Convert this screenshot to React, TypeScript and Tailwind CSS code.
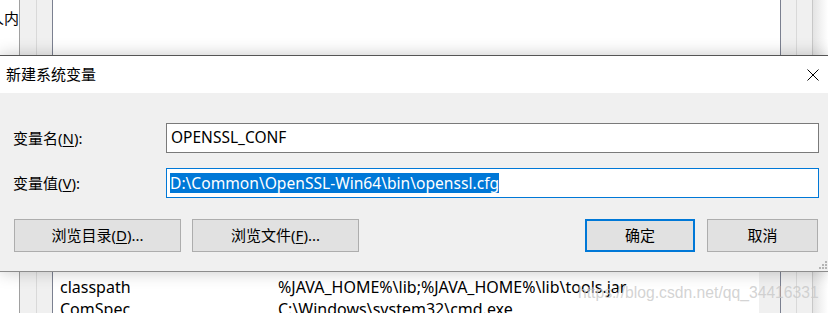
import { useState } from "react";

const uiFont = "font-['Noto_Sans','Noto_Sans_CJK_SC',sans-serif]";

function Mnemonic({ children }: { children: string }) {
  return <span className="underline underline-offset-2 decoration-1">{children}</span>;
}

function DialogButton({
  width,
  primary,
  children,
}: {
  width: string;
  primary?: boolean;
  children: React.ReactNode;
}) {
  return (
    <button
      className={`${width} h-[33px] bg-[#e1e1e1] text-[15px] text-black flex items-center justify-center ${
        primary ? "border-2 border-[#0078d7]" : "border border-[#adadad]"
      }`}
    >
      {children}
    </button>
  );
}

function ResizeGrip() {
  return (
    <svg width="9" height="9" viewBox="0 0 9 9" className="absolute right-0 bottom-[1px]">
      <g fill="#b4b4b4">
        <rect x="6" y="0" width="2" height="2" />
        <rect x="3" y="3" width="2" height="2" />
        <rect x="6" y="3" width="2" height="2" />
        <rect x="0" y="6" width="2" height="2" />
        <rect x="3" y="6" width="2" height="2" />
        <rect x="6" y="6" width="2" height="2" />
      </g>
    </svg>
  );
}

export default function App() {
  const [name] = useState("OPENSSL_CONF");
  const [value] = useState("D:\\Common\\OpenSSL-Win64\\bin\\openssl.cfg");

  const rows = [
    { key: "classpath", val: "%JAVA_HOME%\\lib;%JAVA_HOME%\\lib\\tools.jar" },
    { key: "ComSpec", val: "C:\\Windows\\system32\\cmd.exe" },
  ];

  return (
    <div className={`relative w-[828px] h-[313px] overflow-hidden bg-white ${uiFont}`}>
      {/* window behind the dialog */}
      <div className="flex h-full">
        <div className="w-[19px] overflow-hidden bg-white">
          <div className="ml-[-11px] mt-[8px] whitespace-nowrap text-[15px] leading-[20px] text-black">
            人内容
          </div>
        </div>
        <div className="w-[17px] border-l border-[#a0a0a0] bg-[#f0f0f0]" />
        <div className="w-[16px] border-l border-[#d9d9d9] bg-[#f0f0f0]" />
        <div className="flex-1 flex flex-col border-l border-[#7b8090] bg-white">
          <div className="flex-1" />
          <div className="h-[59px] flex">
            <div className="flex-1 pt-[22px] pl-[7px] text-[16px] leading-[22px] text-black">
              {rows.map((r) => (
                <div key={r.key} className="flex whitespace-nowrap">
                  <span className="w-[218px]">{r.key}</span>
                  <span>{r.val}</span>
                </div>
              ))}
            </div>
            <div className="w-[21px] bg-[#f0f0f0]" />
          </div>
        </div>
        <div className="w-[16px] border-l border-[#7b8090] bg-[#f0f0f0]" />
        <div className="w-[16px] border-l border-[#d9d9d9] bg-[#f0f0f0]" />
        <div className="w-[16px] border-l border-[#c8c8c8] bg-gradient-to-r from-[#e4e4e4] to-white" />
      </div>

      {/* watermark */}
      <div className="absolute left-[578px] top-[282px] whitespace-nowrap font-['Liberation_Sans',sans-serif] text-[15.7px] leading-[22px] text-[#c8c8c8]/80">
        https://blog.csdn.net/qq_34416331
      </div>

      {/* dialog */}
      <div className="absolute left-0 right-0 top-[55px] h-[217px] flex flex-col border-t border-b border-t-[#555555] border-b-[#8c8c8c] shadow-[0_0_16px_rgba(0,0,0,0.22)]">
        <div className="h-[37px] flex items-center justify-between bg-white pl-[6px] pr-[9px]">
          <span className="text-[15px] text-black">新建系统变量</span>
          <svg width="12" height="12" viewBox="0 0 12 12">
            <path d="M0.5 0.5 L11.5 11.5 M11.5 0.5 L0.5 11.5" stroke="#000" strokeWidth="1" />
          </svg>
        </div>

        <div className="relative flex-1 bg-[#f0f0f0] pt-[30px] text-[15px] text-black">
          <div className="flex items-center h-[30px]">
            <label className="w-[166px] pl-[13px]">
              变量名(<Mnemonic>N</Mnemonic>):
            </label>
            <div className="flex-1 mr-[9px] h-full flex items-center border border-[#7a7a7a] bg-white pl-[4px] text-[15.5px]">
              {name}
            </div>
          </div>

          <div className="flex items-center h-[30px] mt-[15px]">
            <label className="w-[166px] pl-[13px]">
              变量值(<Mnemonic>V</Mnemonic>):
            </label>
            <div className="flex-1 mr-[9px] h-full flex items-center border border-[#0078d7] bg-white pl-[3px] text-[15.6px]">
              <span className="inline-block leading-[20px] bg-[#0078d7] text-white">{value}</span>
            </div>
          </div>

          <div className="flex items-center mt-[21px] pl-[14px] pr-[10px]">
            <DialogButton width="w-[167px]">
              浏览目录(<Mnemonic>D</Mnemonic>)...
            </DialogButton>
            <div className="ml-[11px]">
              <DialogButton width="w-[167px]">
                浏览文件(<Mnemonic>F</Mnemonic>)...
              </DialogButton>
            </div>
            <div className="flex-1" />
            <DialogButton width="w-[110px]" primary>
              确定
            </DialogButton>
            <div className="ml-[12px]">
              <DialogButton width="w-[111px]">取消</DialogButton>
            </div>
          </div>

          <ResizeGrip />
        </div>
      </div>
    </div>
  );
}
